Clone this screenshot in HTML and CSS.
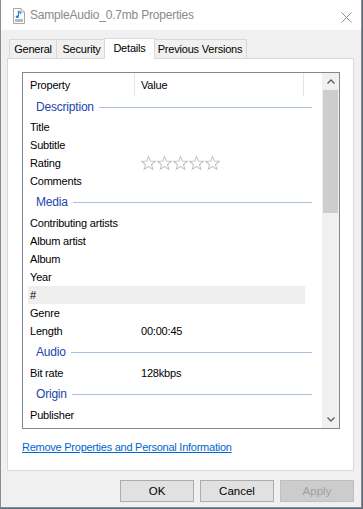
FILE: index.html
```html
<!DOCTYPE html>
<html lang="en">
<head>
  <meta charset="UTF-8">
  <meta name="viewport" content="width=device-width, initial-scale=1.0">
  <title>SampleAudio_0.7mb Properties</title>
  <link rel="stylesheet" href="styles.css">
</head>
<body>
  <div class="window">
    <div class="titlebar">
      <svg class="file-icon" width="12" height="16" viewBox="0 0 12 16">
        <path d="M0.5 0.5 H8 L11.5 4 V15.5 H0.5 Z" fill="#fff" stroke="#a8a8a8"/>
        <path d="M8 0.5 V4 H11.5" fill="#eee" stroke="#a8a8a8"/>
        <path d="M5.5 3 V8.5" stroke="#1e7fd6" stroke-width="1.2"/>
        <path d="M5.5 3 Q7.5 4 8 6" fill="none" stroke="#1e7fd6" stroke-width="1.2"/>
        <ellipse cx="4.2" cy="8.8" rx="1.6" ry="1.2" fill="#1e7fd6"/>
        <rect x="2" y="11" width="8" height="3" fill="#b9b9b9"/>
      </svg>
      <span class="title">SampleAudio_0.7mb Properties</span>
      <svg class="close" width="11" height="11" viewBox="0 0 11 11">
        <path d="M0.5 0.5 L10.5 10.5 M10.5 0.5 L0.5 10.5" stroke="#8a8a8a" stroke-width="1"/>
      </svg>
    </div>

    <div class="dialog">
      <div class="tabs">
        <div class="tab tab-general">General</div>
        <div class="tab tab-security">Security</div>
        <div class="tab tab-details tab-active">Details</div>
        <div class="tab tab-versions">Previous Versions</div>
      </div>

      <div class="panel">
        <div class="listbox">
          <div class="list">
            <div class="list-header">
              <div class="col-name">Property</div>
              <div class="col-value">Value</div>
            </div>

            <div class="group group-first"><span>Description</span></div>
            <div class="row"><div class="col-name">Title</div><div class="col-value"></div></div>
            <div class="row"><div class="col-name">Subtitle</div><div class="col-value"></div></div>
            <div class="row">
              <div class="col-name">Rating</div>
              <div class="col-value stars">
                <svg viewBox="0 0 14 14"><polygon points="7,0.6 8.7,4.65 13.4,4.9 9.76,7.9 11,12.5 7,9.9 3,12.5 4.24,7.9 0.6,4.9 5.3,4.65"/></svg>
                <svg viewBox="0 0 14 14"><polygon points="7,0.6 8.7,4.65 13.4,4.9 9.76,7.9 11,12.5 7,9.9 3,12.5 4.24,7.9 0.6,4.9 5.3,4.65"/></svg>
                <svg viewBox="0 0 14 14"><polygon points="7,0.6 8.7,4.65 13.4,4.9 9.76,7.9 11,12.5 7,9.9 3,12.5 4.24,7.9 0.6,4.9 5.3,4.65"/></svg>
                <svg viewBox="0 0 14 14"><polygon points="7,0.6 8.7,4.65 13.4,4.9 9.76,7.9 11,12.5 7,9.9 3,12.5 4.24,7.9 0.6,4.9 5.3,4.65"/></svg>
                <svg viewBox="0 0 14 14"><polygon points="7,0.6 8.7,4.65 13.4,4.9 9.76,7.9 11,12.5 7,9.9 3,12.5 4.24,7.9 0.6,4.9 5.3,4.65"/></svg>
              </div>
            </div>
            <div class="row"><div class="col-name">Comments</div><div class="col-value"></div></div>

            <div class="group"><span>Media</span></div>
            <div class="row"><div class="col-name">Contributing artists</div><div class="col-value"></div></div>
            <div class="row"><div class="col-name">Album artist</div><div class="col-value"></div></div>
            <div class="row"><div class="col-name">Album</div><div class="col-value"></div></div>
            <div class="row"><div class="col-name">Year</div><div class="col-value"></div></div>
            <div class="row row-hover"><div class="col-name">#</div><div class="col-value"></div></div>
            <div class="row"><div class="col-name">Genre</div><div class="col-value"></div></div>
            <div class="row"><div class="col-name">Length</div><div class="col-value">00:00:45</div></div>

            <div class="group"><span>Audio</span></div>
            <div class="row"><div class="col-name">Bit rate</div><div class="col-value">128kbps</div></div>

            <div class="group"><span>Origin</span></div>
            <div class="row"><div class="col-name">Publisher</div><div class="col-value"></div></div>
          </div>

          <div class="scrollbar">
            <div class="arrow">
              <svg width="8" height="5" viewBox="0 0 8 5"><path d="M0.5 4.5 L4 1 L7.5 4.5" fill="none" stroke="#606060" stroke-width="1.4"/></svg>
            </div>
            <div class="track"><div class="thumb"></div></div>
            <div class="arrow">
              <svg width="8" height="5" viewBox="0 0 8 5"><path d="M0.5 0.5 L4 4 L7.5 0.5" fill="none" stroke="#606060" stroke-width="1.4"/></svg>
            </div>
          </div>
        </div>

        <a class="remove-link" href="#">Remove Properties and Personal Information</a>
      </div>

      <div class="buttons">
        <button class="btn">OK</button>
        <button class="btn">Cancel</button>
        <button class="btn" disabled>Apply</button>
      </div>
    </div>
  </div>
</body>
</html>
```

FILE: styles.css
```css
* {
  box-sizing: border-box;
}

body {
  margin: 0;
  background: #5a6b7c;
  font-family: 'Liberation Sans', Arial, sans-serif;
  font-size: 11px;
  letter-spacing: -0.2px;
  color: #000;
}

.window {
  width: 362px;
  height: 508px;
  border: 1px solid #8c8c8c;
  border-top: 0;
  background: #f0f0f0;
  display: flex;
  flex-direction: column;
}

.titlebar {
  height: 30px;
  background: #fff;
  display: flex;
  align-items: center;
  padding-left: 12px;
  padding-right: 9px;
}

.file-icon {
  margin-top: 2px;
}

.title {
  margin-left: 5px;
  font-size: 12px;
  letter-spacing: -0.2px;
  color: #8a8a8a;
  flex: 1;
}

.close {
  margin-top: 4px;
}

.dialog {
  flex: 1;
  padding: 8px 7px 0 6px;
}

.tabs {
  display: flex;
  align-items: flex-end;
  height: 20px;
  padding-left: 2px;
  position: relative;
  z-index: 1;
}

.tab {
  height: 19px;
  line-height: 18px;
  text-align: center;
  border: 1px solid #d9d9d9;
  border-bottom: 0;
  margin-right: -1px;
  background: #f0f0f0;
}

.tab-general { width: 48px; }
.tab-security { width: 51px; }
.tab-versions { width: 94px; }

.tab-active {
  width: 51px;
  height: 21px;
  line-height: 19px;
  background: #fff;
  margin: 0 -2px -1px -2px;
  position: relative;
}

.panel {
  height: 413px;
  background: #fff;
  border: 1px solid #d9d9d9;
  padding: 13px 0 0 14px;
}

.listbox {
  width: 318px;
  height: 357px;
  border: 1px solid #828790;
  display: flex;
}

.list {
  flex: 1;
  overflow: hidden;
}

.list-header {
  display: flex;
  height: 23px;
  align-items: stretch;
}

.list-header .col-name,
.list-header .col-value {
  display: flex;
  align-items: center;
  border-right: 1px solid #e5e5e5;
}

.col-name {
  width: 112px;
  padding-left: 7px;
  white-space: nowrap;
}

.col-value {
  width: 169px;
  padding-left: 6px;
}

.row {
  display: flex;
  height: 18px;
  align-items: center;
  margin-left: 5px;
  margin-right: 17px;
}

.row .col-name {
  width: 107px;
  padding-left: 2px;
}

.row-hover {
  background: #efefef;
}

.group {
  height: 24px;
  display: flex;
  align-items: center;
  margin-left: 13px;
  margin-right: 10px;
  color: #2046b0;
  font-size: 12px;
}

.group-first {
  height: 22px;
}

.group::after {
  content: "";
  flex: 1;
  height: 1px;
  background: #a9bde6;
  margin-left: 5px;
}

.stars {
  display: flex;
  gap: 1px;
}

.stars svg {
  width: 15px;
  height: 15px;
  fill: none;
  stroke: #c2c2c2;
  stroke-width: 1;
}

.scrollbar {
  width: 17px;
  background: #f0f0f0;
  display: flex;
  flex-direction: column;
}

.arrow {
  height: 17px;
  display: flex;
  align-items: center;
  justify-content: center;
}

.track {
  flex: 1;
}

.thumb {
  height: 123px;
  margin: 0 1px;
  background: #cdcdcd;
}

.remove-link {
  display: inline-block;
  margin-top: 12px;
  color: #0066cc;
  font-size: 11px;
  letter-spacing: -0.25px;
}

.buttons {
  display: flex;
  justify-content: flex-end;
  gap: 6px;
  padding-top: 9px;
}

.btn {
  width: 74px;
  height: 22px;
  background: #e1e1e1;
  border: 1px solid #adadad;
  font-family: 'Liberation Sans', Arial, sans-serif;
  font-size: 11.5px;
  color: #000;
  padding: 0;
}

.btn:disabled {
  background: #cccccc;
  border-color: #bfbfbf;
  color: #a0a0a0;
}
```
